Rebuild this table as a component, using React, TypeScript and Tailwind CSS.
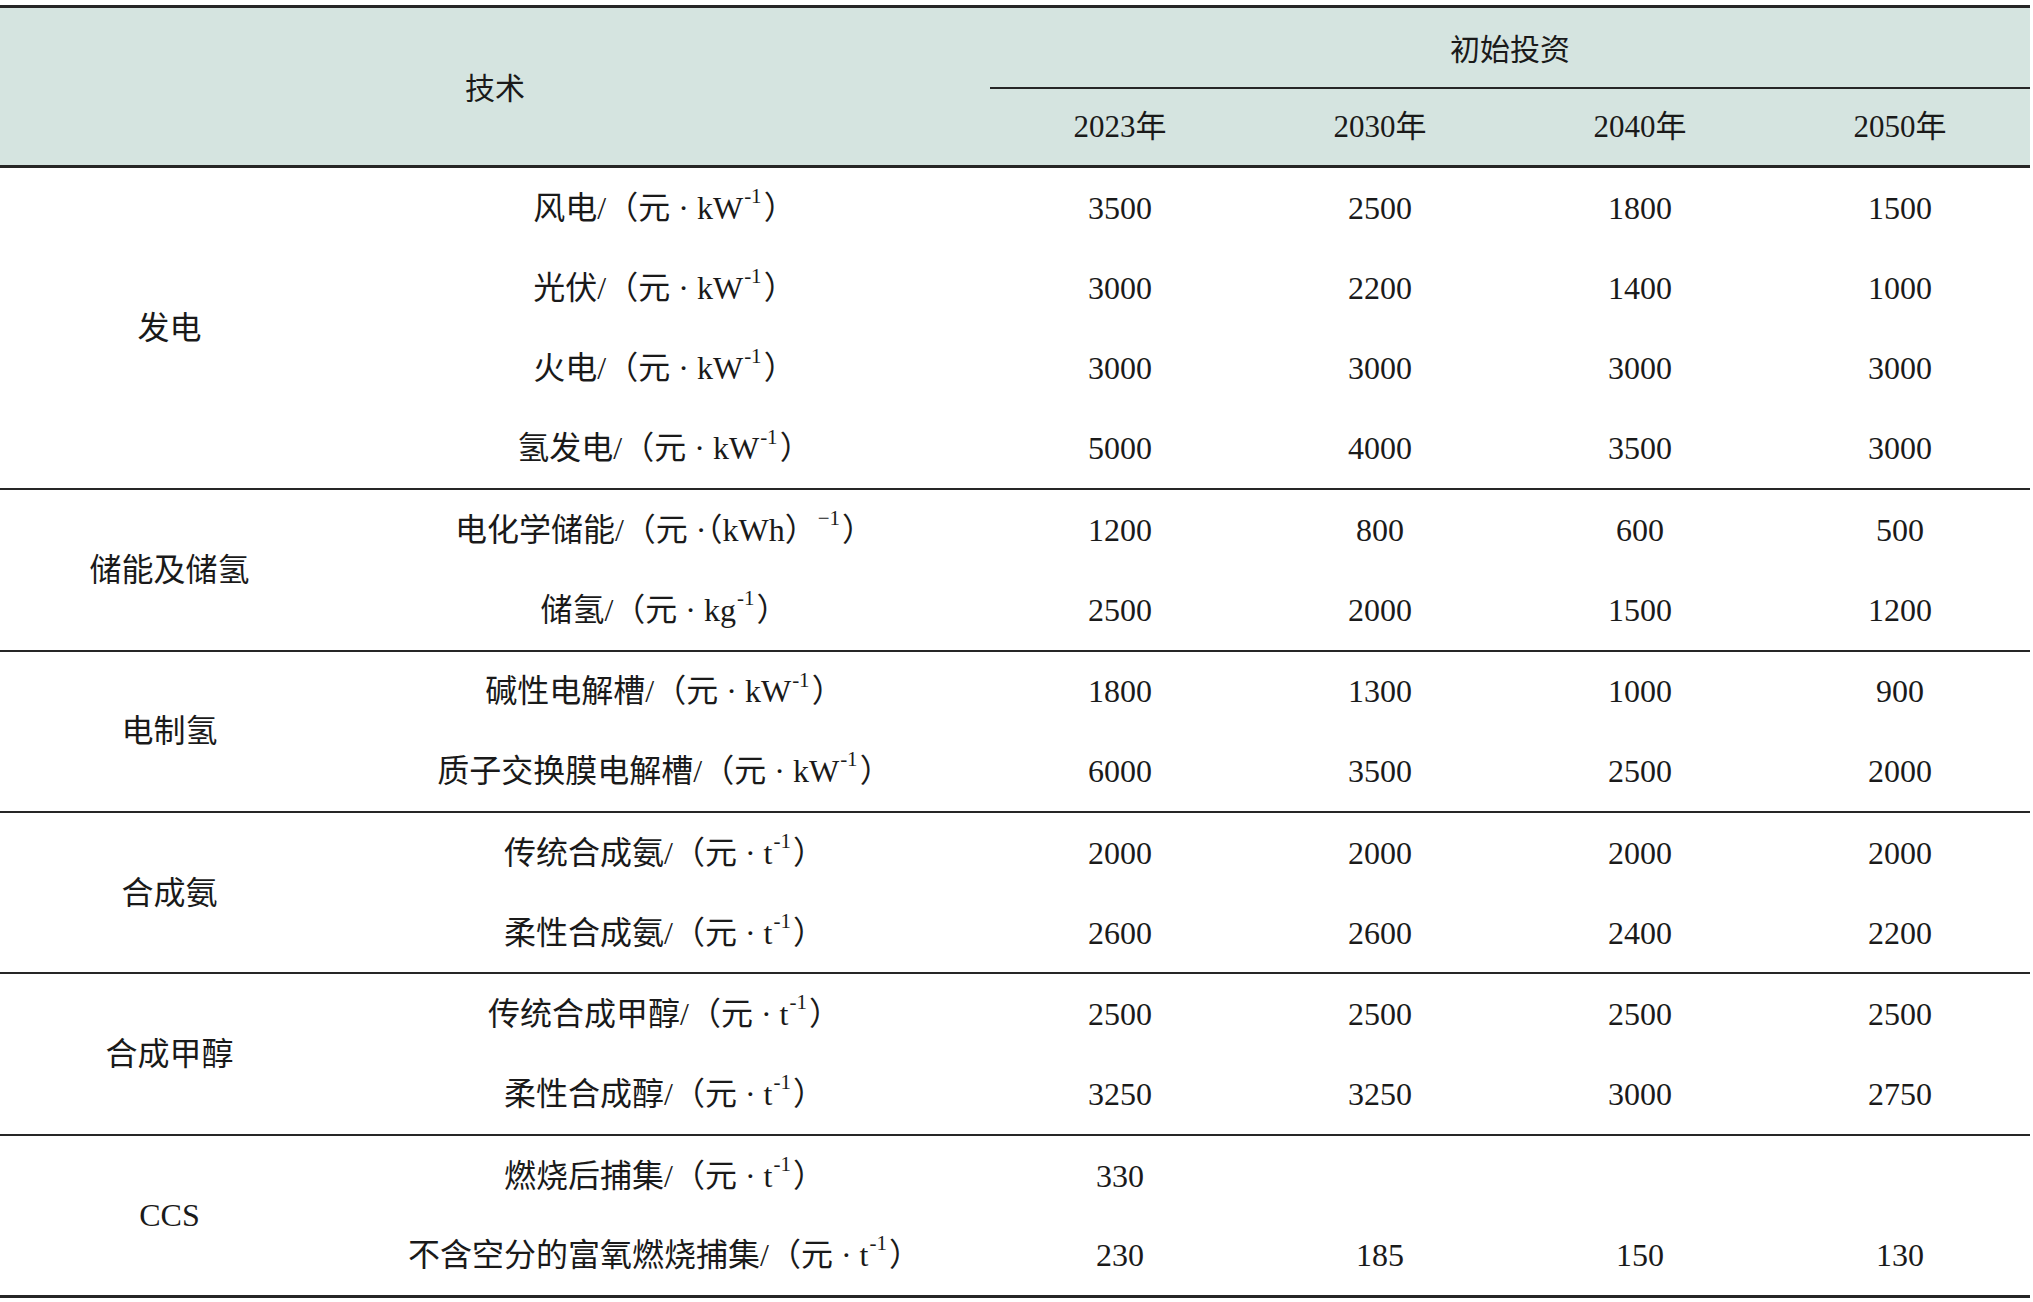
import React from "react";

type Row = { name: React.ReactNode; v: string[] };
type Group = { cat: string; rows: Row[] };

const Sup = ({ children }: { children: React.ReactNode }) => (
  <sup className="text-[21px] -top-[0.75em] ml-[1px] mr-[2px]">{children}</sup>
);

const unitKW = (
  <>
    （元 · kW<Sup>-1</Sup>）
  </>
);
const unitT = (
  <>
    （元 · t<Sup>-1</Sup>）
  </>
);

const groups: Group[] = [
  {
    cat: "发电",
    rows: [
      { name: <>风电/{unitKW}</>, v: ["3500", "2500", "1800", "1500"] },
      { name: <>光伏/{unitKW}</>, v: ["3000", "2200", "1400", "1000"] },
      { name: <>火电/{unitKW}</>, v: ["3000", "3000", "3000", "3000"] },
      { name: <>氢发电/{unitKW}</>, v: ["5000", "4000", "3500", "3000"] },
    ],
  },
  {
    cat: "储能及储氢",
    rows: [
      {
        name: (
          <>
            电化学储能/（元 ·（kWh）<Sup>−1</Sup>）
          </>
        ),
        v: ["1200", "800", "600", "500"],
      },
      {
        name: (
          <>
            储氢/（元 · kg<Sup>-1</Sup>）
          </>
        ),
        v: ["2500", "2000", "1500", "1200"],
      },
    ],
  },
  {
    cat: "电制氢",
    rows: [
      { name: <>碱性电解槽/{unitKW}</>, v: ["1800", "1300", "1000", "900"] },
      { name: <>质子交换膜电解槽/{unitKW}</>, v: ["6000", "3500", "2500", "2000"] },
    ],
  },
  {
    cat: "合成氨",
    rows: [
      { name: <>传统合成氨/{unitT}</>, v: ["2000", "2000", "2000", "2000"] },
      { name: <>柔性合成氨/{unitT}</>, v: ["2600", "2600", "2400", "2200"] },
    ],
  },
  {
    cat: "合成甲醇",
    rows: [
      { name: <>传统合成甲醇/{unitT}</>, v: ["2500", "2500", "2500", "2500"] },
      { name: <>柔性合成醇/{unitT}</>, v: ["3250", "3250", "3000", "2750"] },
    ],
  },
  {
    cat: "CCS",
    rows: [
      { name: <>燃烧后捕集/{unitT}</>, v: ["330", "", "", ""] },
      { name: <>不含空分的富氧燃烧捕集/{unitT}</>, v: ["230", "185", "150", "130"] },
    ],
  },
];

export default function App() {
  const serif = "font-['Liberation_Serif','Noto_Sans_CJK_SC',serif]";
  return (
    <div className="w-[2033px] h-[1302px] bg-white pt-[5px] text-[#1a1a1a]">
      <table className="w-[2030px] border-collapse table-fixed">
        <colgroup>
          <col className="w-[339px]" />
          <col className="w-[651px]" />
          <col className="w-[260px]" />
          <col className="w-[260px]" />
          <col className="w-[260px]" />
          <col className="w-[260px]" />
        </colgroup>
        <thead className="bg-[#d5e4e0]">
          <tr className="h-[81px] border-t-[3px] border-[#262626]">
            <th
              colSpan={2}
              rowSpan={2}
              className="font-normal text-[30px] font-['Noto_Sans_CJK_SC',sans-serif] text-center align-middle"
            >
              技术
            </th>
            <th
              colSpan={4}
              className="font-normal text-[30px] font-['Noto_Sans_CJK_SC',sans-serif] text-center align-middle border-b-2 border-[#262626]"
            >
              初始投资
            </th>
          </tr>
          <tr className="h-[79px] border-b-[3px] border-[#262626]">
            {["2023年", "2030年", "2040年", "2050年"].map((y) => (
              <th key={y} className={`font-normal text-[31px] ${serif} text-center align-middle`}>
                {y}
              </th>
            ))}
          </tr>
        </thead>
        <tbody className={`${serif} text-[32px]`}>
          {groups.map((g, gi) =>
            g.rows.map((r, ri) => (
              <tr
                key={`${gi}-${ri}`}
                className={
                  "h-[80.7px] " +
                  (ri === 0 && gi > 0 ? "border-t-2 border-[#262626] " : "") +
                  (gi === groups.length - 1 && ri === g.rows.length - 1
                    ? "border-b-[3px] border-[#262626]"
                    : "")
                }
              >
                {ri === 0 && (
                  <td rowSpan={g.rows.length} className="text-center align-middle">
                    {g.cat}
                  </td>
                )}
                <td className="text-center align-middle whitespace-nowrap">{r.name}</td>
                {r.v.map((x, xi) => (
                  <td key={xi} className="text-center align-middle">
                    {x}
                  </td>
                ))}
              </tr>
            ))
          )}
        </tbody>
      </table>
    </div>
  );
}
